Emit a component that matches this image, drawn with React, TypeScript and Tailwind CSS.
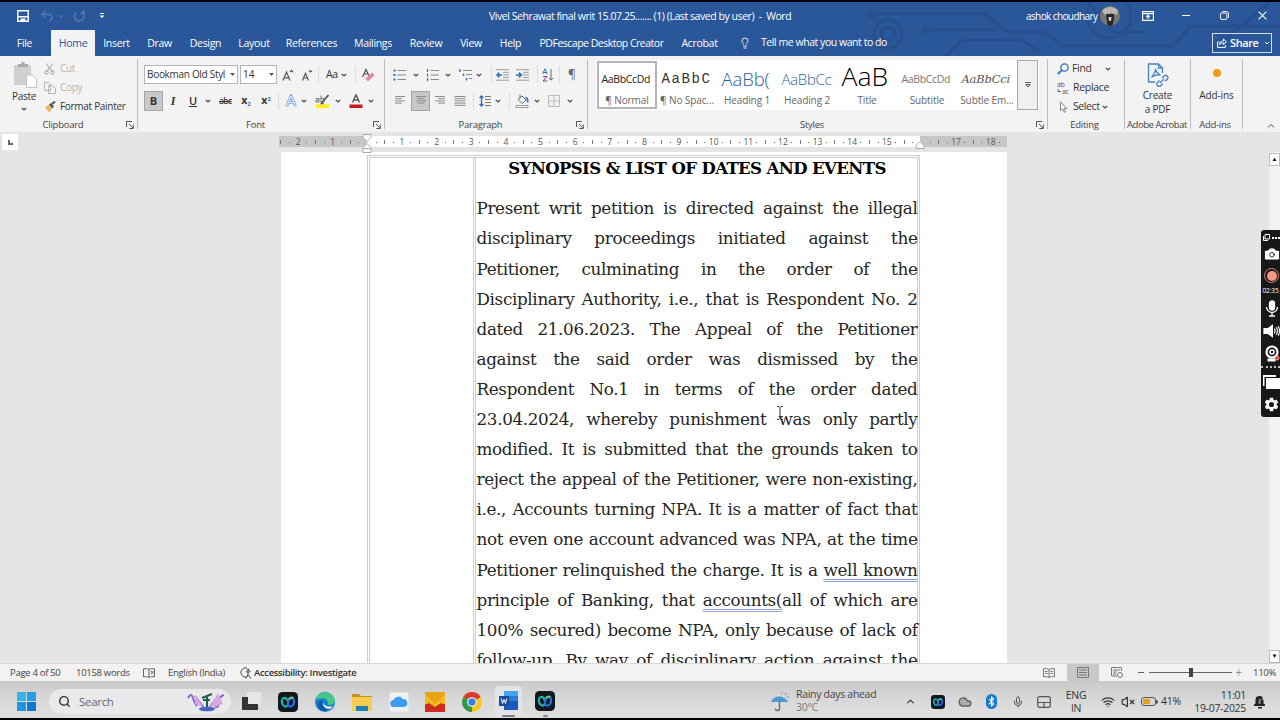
import type { ReactNode } from "react";
import { Search, Wifi, Mic, VolumeX, ChevronUp, Cloud, Lightbulb, Camera, Bluetooth } from "lucide-react";

const TABS = ["Insert", "Draw", "Design", "Layout", "References", "Mailings", "Review", "View", "Help", "PDFescape Desktop Creator", "Acrobat"];

const LINES: ReactNode[] = [
  "Present writ petition is directed against the illegal",
  "disciplinary proceedings initiated against the",
  "Petitioner, culminating in the order of the",
  "Disciplinary Authority, i.e., that is Respondent No. 2",
  "dated 21.06.2023. The Appeal of the Petitioner",
  "against the said order was dismissed by the",
  "Respondent No.1 in terms of the order dated",
  "23.04.2024, whereby punishment was only partly",
  "modified. It is submitted that the grounds taken to",
  "reject the appeal of the Petitioner, were non-existing,",
  "i.e., Accounts turning NPA. It is a matter of fact that",
  "not even one account advanced was NPA, at the time",
  <>Petitioner relinquished the charge. It is a <Flagged>well known</Flagged></>,
  <>principle of Banking, that <Flagged>accounts(</Flagged>all of which are</>,
  "100% secured) become NPA, only because of lack of",
  "follow-up. By way of disciplinary action against the",
];

// quarter-centimetre marks, counted from the left indent
const MARKS = Array.from({ length: 84 }, (_, i) => i - 10);

function Flagged({ children }: { children: ReactNode }) {
  return <span className="underline decoration-[#8ea3dc] decoration-double decoration-1 underline-offset-[3px] [text-decoration-skip-ink:none]">{children}</span>;
}

function Chevron({ className = "" }: { className?: string }) {
  return (
    <svg viewBox="0 0 8 8" className={`h-2 w-2 shrink-0 ${className}`} fill="none" stroke="#444" strokeWidth="1.2">
      <path d="M1.8 2.8 4 5l2.2-2.2" />
    </svg>
  );
}

function Caret() {
  return (
    <svg viewBox="0 0 5 3" className="h-[3px] w-[5px] shrink-0 fill-[#555]">
      <path d="M0 0h5L2.500 3z" />
    </svg>
  );
}

function Divider({ className = "" }: { className?: string }) {
  return <span className={`h-[17px] w-px shrink-0 bg-[#dcdcdc] ${className}`} />;
}

function Launcher({ className = "" }: { className?: string }) {
  return (
    <svg viewBox="0 0 8 8" className={`h-2 w-2 shrink-0 ${className}`} fill="none" stroke="#555" strokeWidth="1">
      <path d="M.5 6V.5H6M3 3l4 4M7.3 3.5v4h-4" />
    </svg>
  );
}

function Lines({ rows, className = "" }: { rows: [number, number][]; className?: string }) {
  return (
    <svg viewBox="0 0 12 12" className={`h-3 w-3 shrink-0 ${className}`} stroke="#8a8a8a" strokeWidth="1">
      {rows.map(([a, b], i) => (
        <path key={i} d={`M${a} ${1.5 + i * 2.2}H${b}`} />
      ))}
    </svg>
  );
}

function ListIcon({ kind, className = "" }: { kind: "dot" | "num" | "multi"; className?: string }) {
  return (
    <svg viewBox="0 0 14 12" className={`h-3 w-3.5 shrink-0 ${className}`} stroke="#8a8a8a" strokeWidth="1">
      {kind === "multi" ? (
        <>
          <path d="M4 1.5h9M7 5.5h6M10 9.5h3" />
          <path d="M1 0v3M4.500 4.500v2.500M7.500 9v2.500" stroke="#2f6eb5" strokeWidth="1.3" />
        </>
      ) : (
        <>
          <path d="M4.500 1.500H13M4.500 6H13M4.500 10.500H13" />
          {kind === "dot" ? (
            <path d="M.5 1.500h2M.5 6h2M.5 10.500h2" stroke="#2f6eb5" strokeWidth="2" />
          ) : (
            <path d="M1.500 0v3M1.500 4.500v3M1.500 9v3" stroke="#2f6eb5" strokeWidth="1.2" />
          )}
        </>
      )}
    </svg>
  );
}

function IndentIcon({ flip, className = "" }: { flip?: boolean; className?: string }) {
  return (
    <svg viewBox="0 0 13 12" className={`h-3 w-[13px] shrink-0 ${className}`} fill="none">
      <path d="M0 .7h13M7 3.300h6M7 5.900h6M7 8.500h6M0 11.200h13" stroke="#9a9a9a" />
      <path d={flip ? "M0 6h5M3 3.6 5.4 6 3 8.4" : "M1 6h5M3.4 3.6 1 6l2.4 2.4"} stroke="#2f6eb5" strokeWidth="1.5" />
    </svg>
  );
}

function Webex({ className = "" }: { className?: string }) {
  return (
    <svg viewBox="0 0 20 20" className={`shrink-0 ${className}`} fill="none">
      <rect width="20" height="20" rx="4.5" fill="#111820" />
      <ellipse cx="7" cy="10.2" rx="3" ry="4.4" stroke="#18b9a8" strokeWidth="2.2" transform="rotate(-15 7 10.2)" />
      <ellipse cx="13" cy="10.2" rx="3" ry="4.4" stroke="#2b6cf0" strokeWidth="2.2" transform="rotate(15 13 10.2)" />
      <path d="M11 7.500c1-2 3-2.400 4.200-1.200" stroke="#55d66b" strokeWidth="2" />
    </svg>
  );
}

function TitleBar() {
  return (
    <header className="relative flex h-[54px] flex-col bg-[#2a579a] text-white">
      <svg viewBox="0 0 420 54" className="absolute right-0 top-0 h-[54px] w-[420px]" fill="none" stroke="#264f8e" strokeWidth="3">
        <circle cx="12" cy="12" r="3" />
        <path d="M15 12h110l22 18h38l18 14h110l18-20h89" />
        <circle cx="28" cy="32" r="14" />
        <circle cx="28" cy="32" r="7" />
        <circle cx="66" cy="28" r="3" />
        <path d="M69 28h68M86 54l16-16h60l20 13M228 0l24 30h34M350 50l60-50" strokeWidth="2.4" />
        <circle cx="249" cy="14" r="22" strokeWidth="2" />
      </svg>
      <div className="relative flex h-[27px] items-center">
        <svg viewBox="0 0 12 12" className="ml-[17px] h-3 w-3" fill="none" stroke="#fff" strokeWidth="1.4">
          <path d="M.8.8h10.400v10.400H.8zM1 6.800h10" />
          <path d="M3.500 8.500h5v3h-5z" fill="#fff" stroke="none" />
        </svg>
        <svg viewBox="0 0 13 12" className="ml-3 h-3 w-[13px]" fill="none" stroke="#4f78b4" strokeWidth="1.5">
          <path d="M4.500 1 1 4.200l3.500 3.300M1 4.200h7a3.200 3.200 0 0 1 3 3.800c-.3 1.700-1.700 2.600-3 3" />
        </svg>
        <svg viewBox="0 0 8 8" className="ml-[3px] h-2 w-2" fill="none" stroke="#4f78b4">
          <path d="m2 3 2 2 2-2" />
        </svg>
        <svg viewBox="0 0 12 12" className="ml-2 h-3 w-3" fill="none" stroke="#4f78b4" strokeWidth="1.5">
          <path d="M8.500 1.500A5 5 0 1 1 3 2.100M11 0v3.500H7.500" />
        </svg>
        <svg viewBox="0 0 6 6" className="ml-[14px] h-1.5 w-1.5 fill-white">
          <path d="M1 0h4v1H1zM.5 2.500h5L3 5z" />
        </svg>
        <p className="ml-[384px] mt-[3px] w-[304px] whitespace-nowrap text-[10.5px] tracking-[-0.44px]">
          Vivel Sehrawat final writ 15.07.25....... (1) (Last saved by user)&nbsp; -&nbsp; Word
        </p>
        <p className="ml-[233px] mt-[2px] w-[67px] whitespace-nowrap text-[10px] tracking-[-0.6px]">ashok choudhary</p>
        <svg viewBox="0 0 20 20" className="ml-[7px] h-5 w-5">
          <circle cx="10" cy="10" r="10" fill="#77756f" />
          <path d="M2 5a10 10 0 0 1 16 0l-1 4-6-2-5 3z" fill="#b8b6ae" />
          <path d="M6 8h8v4l-1.500 7.500a10 10 0 0 1-5-.1z" fill="#25262a" />
          <path d="M8.500 11h3l-.5 4H9z" fill="#d8d4cd" />
        </svg>
        <svg viewBox="0 0 12 10" className="ml-[22px] h-2.5 w-3" fill="none" stroke="#fff" strokeWidth="1.1">
          <path d="M.6.6h10.800v8.800H.6zM.6 2.600h10.800M6 8V4.400M4.300 6 6 4.300 7.700 6" />
        </svg>
        <span className="ml-[28px] h-px w-2 bg-white" />
        <svg viewBox="0 0 9 9" className="ml-[30px] h-[9px] w-[9px]" fill="none" stroke="#fff">
          <rect x=".5" y="2" width="6.400" height="6.400" rx="1.2" />
          <path d="M2.500.6h4a2 2 0 0 1 2 2v4" />
        </svg>
        <svg viewBox="0 0 9 9" className="ml-[29px] h-[9px] w-[9px]" stroke="#fff" strokeWidth="1.1">
          <path d="m.6.6 7.800 7.800M8.400.6.6 8.400" />
        </svg>
      </div>
      <nav className="relative flex h-[27px] items-end text-[10.5px] tracking-[-0.3px]">
        <div className="grid h-[26px] grid-cols-[51px_44px_43px_43px_49px_48px_67px_56px_50px_40px_39px_143px_53px] items-center whitespace-nowrap text-center">
          <span className="pr-0.5 pt-px">File</span>
          <span className="flex h-full items-center justify-center bg-[#f3f3f3] pt-px text-[#2a579a]">Home</span>
          {TABS.map((t) => (
            <span key={t} className={t.length > 12 ? "pt-px tracking-[-0.5px]" : "pt-px"}>
              {t}
            </span>
          ))}
        </div>
        <Lightbulb className="mb-[6px] ml-[13px] h-[14px] w-3" strokeWidth={1.8} />
        <span className="mb-[5px] ml-[10px] w-[440px] tracking-[-0.45px]">Tell me what you want to do</span>
        <div className="mb-[3px] ml-[11px] flex h-5 w-[60px] items-center border border-white/80 pl-1">
          <svg viewBox="0 0 10 10" className="h-2.5 w-2.5 shrink-0" fill="none" stroke="#fff">
            <path d="M2.500 4H.6v5.400h7.800V7M2.500 6.500C3 4 4.500 3 6.500 3V1L9.400 3.800 6.500 6.500V5C4.500 5 3.500 5.500 2.500 6.500" />
          </svg>
          <b className="ml-[3px] w-[29px] text-[11px] font-semibold tracking-[-0.4px]">Share</b>
          <svg viewBox="0 0 8 8" className="ml-1 h-2 w-2 shrink-0" fill="none" stroke="#fff">
            <path d="m2 3 2 2 2-2" />
          </svg>
        </div>
      </nav>
    </header>
  );
}

function Group({ label, launcher, className, children }: { label: string; launcher?: boolean; className: string; children: ReactNode }) {
  return (
    <section className={`flex h-[70px] shrink-0 flex-col border-r border-[#bdbdbd] ${className}`}>
      <div className="h-[60px]">{children}</div>
      <div className="flex h-[12px] shrink-0 items-center pr-[3px] pt-[4px] text-[9.5px] tracking-[-0.25px] text-[#444]">
        <span className={`flex-1 whitespace-nowrap text-center ${label.length > 10 ? "pl-[2px] tracking-[-0.45px]" : ""}`}>{label}</span>
        {launcher && <Launcher />}
      </div>
    </section>
  );
}

function StyleTile({ name, className, selected, sample }: { name: string; className: string; selected?: boolean; sample: string }) {
  return (
    <div className={`flex h-[48px] w-[60px] shrink-0 flex-col items-center border-2 ${selected ? "border-[#b5b5b5]" : "border-transparent"}`}>
      <div className={`flex h-[29px] w-[51px] items-center whitespace-nowrap pt-[3px] leading-[26px] ${className}`}>{sample}</div>
      <div className="whitespace-nowrap text-[10px] leading-[16px] tracking-[-0.1px] text-[#666]">{name}</div>
    </div>
  );
}

function Ribbon() {
  return (
    <div className="flex h-[76px] bg-[#f3f3f3] pt-[3px] text-[11px] text-[#333]">
      <Group label="Clipboard" launcher className="w-[138px]">
        <div className="flex">
          <div className="ml-[11px] flex w-[26px] flex-col items-center pt-[3px]">
            <svg viewBox="0 0 24 26" className="ml-0.5 h-[26px] w-6">
              <path d="M1 3h17v20H1z" fill="#d0cfd1" />
              <path d="M5 2h3a2 2 0 0 1 4 0h3v3H5z" fill="#aaa" />
              <path d="M13.500 13h6l4 4v8.500h-10z" fill="#fff" stroke="#c4c4c4" />
            </svg>
            <span className="mt-0.5 text-[10px] leading-[13px] tracking-[-0.3px]">Paste</span>
            <Chevron className="mt-0.5" />
          </div>
          <div className="ml-[7px] flex flex-col text-[10px] tracking-[-0.3px]">
            <div className="flex h-[19px] items-center gap-[5px] text-[#b3b3b3]">
              <svg viewBox="0 0 11 12" className="h-3 w-[11px]" fill="none" stroke="#999">
                <path d="M2 .5 7.800 8M9 .5 3.200 8" />
                <circle cx="2.500" cy="9.500" r="1.700" />
                <circle cx="8.500" cy="9.500" r="1.700" />
              </svg>
              Cut
            </div>
            <div className="flex h-[19px] items-center gap-[4px] text-[#b3b3b3]">
              <svg viewBox="0 0 12 12" className="h-3 w-3" fill="#f3f3f3" stroke="#b3b3b3">
                <path d="M.5.500h4l2 2v6h-6zM4.500 3.500h4l3 3v5h-7z" />
              </svg>
              Copy
            </div>
            <div className="flex h-[19px] items-center gap-[4px] whitespace-nowrap">
              <svg viewBox="0 0 12 12" className="h-3 w-3">
                <path d="m1 6 4-2 3 4-3 3.500z" fill="#eab765" />
                <path d="m5 3.500 2-1.500 3 3.500-2 2z" fill="#555" />
                <path d="m8 3 3-2.500" stroke="#555" strokeWidth="2" />
              </svg>
              Format Painter
            </div>
          </div>
        </div>
      </Group>

      <Group label="Font" launcher className="w-[247px]">
        <div className="ml-[6px] flex h-[31px] items-center">
          <div className="flex h-[19px] w-[94px] shrink-0 items-center justify-between border border-[#b5b5b5] bg-white px-[2px] text-[10px] tracking-[-0.3px]">
            <span className="whitespace-nowrap">Bookman Old Styl</span>
            <Caret />
          </div>
          <div className="ml-[2px] flex h-[19px] w-[37px] shrink-0 items-center justify-between border border-[#b5b5b5] bg-white px-[2px] text-[10px]">
            14 <Caret />
          </div>
          <svg viewBox="0 0 12 12" className="ml-[5px] h-3 w-3 shrink-0" fill="none" stroke="#555" strokeWidth="1.200">
            <path d="M1 11.500 4.500 3 8 11.500M2.200 8.800h4.600M8 3l1.500-1.600L11 3" />
          </svg>
          <svg viewBox="0 0 12 12" className="ml-[7px] h-3 w-3 shrink-0" fill="none" stroke="#555" strokeWidth="1.200">
            <path d="M1.500 11.500 4.500 4.300l3 7.200M2.500 9h4M8 1.500 9.500 3 11 1.500" />
          </svg>
          <Divider className="ml-[5px]" />
          <span className="ml-[7px] w-[13px] text-[10.5px] tracking-[-0.4px]">Aa</span>
          <Chevron className="ml-[1px]" />
          <Divider className="ml-[7px]" />
          <svg viewBox="0 0 14 14" className="ml-[5px] h-3.5 w-3.5 shrink-0" fill="none">
            <path d="M1.500 9 5 1.500 8.500 9M3 6h4" stroke="#555" strokeWidth="1.200" />
            <path d="m4.500 10.500 6.500-6 2.500 2.500-6.500 6.500z" fill="#e5879a" />
          </svg>
        </div>
        <div className="ml-[6px] flex h-[22px] items-center">
          <span className="flex h-5 w-[19px] shrink-0 items-center justify-center border border-[#a5a5a5] bg-[#c8c8c8] font-bold">B</span>
          <span className="ml-[4px] w-3 text-center font-['Liberation_Serif'] text-[12px] font-bold italic">I</span>
          <span className="ml-[8px] w-3 text-center text-[11px] font-semibold underline">U</span>
          <Chevron className="ml-[5px]" />
          <span className="ml-[7px] w-[15px] text-[8.5px] font-semibold tracking-[-0.6px] line-through">abc</span>
          <span className="ml-[5px] w-3.5 whitespace-nowrap text-center text-[10.5px] font-bold">x<sub className="text-[6px] text-[#2f6eb5]">2</sub></span>
          <span className="ml-[6px] w-3.5 whitespace-nowrap text-center text-[10.5px] font-bold">x<sup className="text-[6px] text-[#2f6eb5]">2</sup></span>
          <Divider className="ml-[5px]" />
          <svg viewBox="0 0 14 14" className="ml-[5px] h-3.5 w-3.5 shrink-0" fill="none">
            <path d="M2.500 12.500 7 2l4.500 10.500M4.500 8.700h5" stroke="#78a9de" strokeWidth="2.800" />
            <path d="M2.500 12.500 7 2l4.500 10.500M4.500 8.700h5" stroke="#fff" strokeWidth=".9" />
          </svg>
          <Chevron className="ml-[2px]" />
          <svg viewBox="0 0 18 14" className="ml-[6px] h-3.5 w-[18px] shrink-0" fill="none">
            <path d="M2 10.300h13V14H2z" fill="#ffee1c" />
            <path d="m8 8.500 6.500-7.500M6.500 9.500l3-.5" stroke="#555" strokeWidth="1.800" />
            <path d="M2 4.500h3V8H2V6h3M7 1.500V8M7 4.500h3V8H7" stroke="#666" strokeWidth=".9" />
          </svg>
          <Chevron className="ml-[2px]" />
          <svg viewBox="0 0 14 14" className="ml-[7px] h-3.5 w-3.5 shrink-0" fill="none">
            <path d="M3.500 8.500 7 .8l3.500 7.700M4.800 6h4.400" stroke="#555" strokeWidth="1.400" />
            <path d="M.5 10.500h13V14H.5z" fill="#c8161d" />
          </svg>
          <Chevron className="ml-[4px]" />
        </div>
      </Group>

      <Group label="Paragraph" launcher className="w-[203px]">
        <div className="ml-[8px] flex h-[31px] items-center">
          <ListIcon kind="dot" />
          <Chevron className="ml-[5px]" />
          <ListIcon kind="num" className="ml-[6px]" />
          <Chevron className="ml-[4px]" />
          <ListIcon kind="multi" className="ml-[7px]" />
          <Chevron className="ml-[2px]" />
          <Divider className="ml-[8px]" />
          <IndentIcon className="ml-[4px]" />
          <IndentIcon flip className="ml-[7px]" />
          <Divider className="ml-[8px]" />
          <svg viewBox="0 0 12 14" className="ml-[4px] h-3.5 w-3 shrink-0" fill="none">
            <path d="M.7 6 3 .8 5.300 6M1.500 4.500h3" stroke="#2f6eb5" />
            <path d="M1 8.500h4l-4 4.500h4.300" stroke="#7b3f99" />
            <path d="M9 1v11M6.800 9.800 9 12.200l2.200-2.400" stroke="#666" />
          </svg>
          <Divider className="ml-[5px]" />
          <span className="ml-[6px] w-3 text-center text-[12px] text-[#666]">¶</span>
        </div>
        <div className="ml-[9px] flex h-[22px] items-center">
          <Lines rows={[[1, 11], [1, 8], [1, 11], [1, 8]]} />
          <span className="ml-[5px] flex h-5 w-[19px] items-center justify-center border border-[#a5a5a5] bg-[#c8c8c8]">
            <Lines rows={[[1, 11], [2.5, 9.5], [1, 11], [2.5, 9.5]]} />
          </span>
          <Lines className="ml-[4px]" rows={[[1, 11], [4, 11], [1, 11], [4, 11]]} />
          <Lines className="ml-[8px]" rows={[[0.5, 11.5], [0.5, 11.5], [0.5, 11.5], [0.5, 11.5], [0.5, 11.5]]} />
          <Divider className="ml-[7px]" />
          <svg viewBox="0 0 13 12" className="ml-[5px] h-3 w-[13px] shrink-0" fill="none">
            <path d="M6 1.500h6M6 4.500h6M6 7.500h6M6 10.500h6" stroke="#777" />
            <path d="M2.500 1v10M.6 3 2.500 1l1.900 2M.6 9l1.900 2 1.900-2" stroke="#2f6eb5" strokeWidth="1.300" />
          </svg>
          <Chevron className="ml-[2px]" />
          <Divider className="ml-[7px]" />
          <svg viewBox="0 0 14 14" className="ml-[5px] h-3.5 w-3.5 shrink-0" fill="none">
            <path d="M3 5.500 7 2l4 4-4 3.500zM5 .5v4" stroke="#666" />
            <path d="M10.500 3.500c2 .5 2.500 2.500 2 5" stroke="#2f6eb5" strokeWidth="1.600" />
            <path d="M1 11.500h12v2H1z" stroke="#999" fill="#fff" />
          </svg>
          <Chevron className="ml-[4px]" />
          <svg viewBox="0 0 12 12" className="ml-[7px] h-3 w-3 shrink-0" fill="none" stroke="#bbb">
            <path d="M.5.500h11v11H.5zM6 .5v11M.5 6h11" />
          </svg>
          <Chevron className="ml-[6px]" />
        </div>
      </Group>

      <Group label="Styles" launcher className="w-[460px]">
        <div className="ml-[8px] mt-[1px] flex h-[50px] w-[443px] bg-white pl-px pt-[1px]">
          <StyleTile selected name="¶ Normal" sample="AaBbCcDd" className="text-[10.5px] tracking-[-0.35px] text-[#222]" />
          <StyleTile name="¶ No Spac..." sample="AaBbC" className="font-['Liberation_Mono'] text-[14px] tracking-[1.600px] text-[#333]" />
          <StyleTile name="Heading 1" sample="AaBb(" className="text-[18.5px] font-light tracking-[-0.1px] text-[#2e5d96]" />
          <StyleTile name="Heading 2" sample="AaBbCc" className="text-[15px] font-light tracking-[-0.3px] text-[#2e5d96]" />
          <StyleTile name="Title" sample="AaB" className="pb-[6px] text-[26.5px] font-light text-black" />
          <StyleTile name="Subtitle" sample="AaBbCcDd" className="text-[10.5px] tracking-[-0.35px] text-[#777]" />
          <StyleTile name="Subtle Em..." sample="AaBbCci" className="font-['DejaVu_Serif'] text-[11.5px] italic tracking-[-0.2px] text-[#555]" />
          <div className="mt-[-1px] flex h-[50px] w-[21px] items-center justify-center border border-[#a9a9a9] bg-[#f0f0f0]">
            <svg viewBox="0 0 6 6" className="h-1.5 w-1.5" fill="none" stroke="#555">
              <path d="M0 .5h6M.8 2.500 3 5l2.200-2.500z" />
            </svg>
          </div>
        </div>
      </Group>

      <Group label="Editing" className="w-[77px]">
        <div className="flex flex-col pl-[9px] text-[10.5px] tracking-[-0.3px]">
          <div className="flex h-[19px] items-center">
            <svg viewBox="0 0 12 12" className="h-3 w-3" fill="none" stroke="#2f6eb5" strokeWidth="1.300">
              <circle cx="7.500" cy="4.500" r="3.700" />
              <path d="M4.800 7.200.8 11.200" strokeWidth="1.800" />
            </svg>
            <span className="ml-[3px] w-[32px]">Find</span>
            <Chevron />
          </div>
          <div className="flex h-[19px] items-center">
            <svg viewBox="0 0 12 12" className="h-3 w-3 overflow-visible font-['Open_Sans'] text-[7px]">
              <text x="0" y="5" fill="#7b3f99">ab</text>
              <text x="5" y="11.500" fill="#555">ac</text>
              <path d="M1 7v2.500h3" stroke="#2f6eb5" fill="none" />
            </svg>
            <span className="ml-[4px]">Replace</span>
          </div>
          <div className="flex h-[19px] items-center">
            <svg viewBox="0 0 12 12" className="h-3 w-3" fill="#fff" stroke="#888">
              <path d="M3.500.8v9l2.200-2 1.500 3.500 1.300-.6-1.500-3.200h3z" />
            </svg>
            <span className="ml-[4px] tracking-[-0.4px]">Select</span>
            <Chevron className="ml-[1px]" />
          </div>
        </div>
      </Group>

      <Group label="Adobe Acrobat" className="w-[66px]">
        <div className="flex flex-col items-center pt-[4px] text-center text-[10px] leading-[13.5px] tracking-[-0.2px]">
          <svg viewBox="0 0 22 25" className="h-[25px] w-[22px]" fill="none" stroke="#4a80c4" strokeWidth="1.300">
            <path d="M8 19H1.500V1h10l4 4v5M11.500 1v4h4" />
            <path d="M4.500 14c2-2 4-5 4-8 1 4 3 5.500 5 6-3-.5-6 .5-9 2z" />
            <path d="m13 20 4-4M12.500 17.500l-2 2a2.200 2.200 0 0 0 3.200 3.200l2-2M15 15l2-2a2.200 2.200 0 0 1 3.200 3.200l-2 2" />
          </svg>
          <span className="mt-px">Create</span>
          a PDF
        </div>
      </Group>

      <Group label="Add-ins" className="w-[52px]">
        <div className="flex flex-col items-center pt-[10px] text-[10px] tracking-[-0.1px]">
          <span className="h-2 w-2 rounded-full bg-[#f39a14]" />
          <span className="mt-[11px]">Add-ins</span>
        </div>
      </Group>
      <div className="flex h-[70px] flex-1 items-end justify-end pr-[5px]">
        <svg viewBox="0 0 8 6" className="h-1.5 w-2" fill="none" stroke="#555">
          <path d="m.8 4.500 3.200-3 3.200 3" />
        </svg>
      </div>
    </div>
  );
}

function Ruler() {
  return (
    <div className="flex h-5 items-start bg-[#e5e5e5]">
      <div className="ml-[2px] mt-[2px] flex h-4 w-4 items-center justify-center bg-white">
        <span className="h-[5px] w-[5px] border-b-2 border-l-2 border-[#666]" />
      </div>
      <div className="relative ml-[261px] mt-1 h-[11px] w-[728px] bg-[linear-gradient(90deg,#c6c6c6_88px,#fff_88px,#fff_641px,#c6c6c6_641px)]">
        <div className="-ml-[2.5px] flex h-full items-center pt-px text-[8.5px] leading-none text-[#555]">
          {MARKS.map((m) => (
            <span key={m} className="flex w-[8.67px] shrink-0 items-center justify-center">
              {m === 0 || m === 64 ? "" : m % 4 === 0 ? Math.abs(m / 4) : m % 2 === 0 ? <i className="h-1 w-px bg-[#777]" /> : <i className="h-px w-px bg-[#666]" />}
            </span>
          ))}
        </div>
        <svg viewBox="0 0 10 20" className="absolute left-[83px] top-[-2px] h-5 w-2.5" fill="#fff" stroke="#aaa">
          <path d="M1 .5h8v3L5 7.500l-4-4zM5 9.500l4 4v5H1v-5zM1 14.500h8" />
        </svg>
        <svg viewBox="0 0 10 8" className="absolute left-[636px] top-[5px] h-2 w-2.5" fill="#fff" stroke="#aaa">
          <path d="m5 .5 4 4v3H1v-3z" />
        </svg>
      </div>
    </div>
  );
}

function Document() {
  return (
    <main className="flex h-[511px] justify-between overflow-hidden bg-[#e5e5e5]">
      <div className="ml-[281px] flex w-[726px] bg-white">
        <div className="ml-[86px] mt-[3px] flex w-[553px] shrink-0 border-x-[3px] border-t-[3px] border-double border-[#cdcdcd]">
          <div className="w-[106px] shrink-0 border-r-[3px] border-double border-[#cdcdcd]" />
          <article className="ml-[0.5px] w-[441px] shrink-0 whitespace-nowrap font-['DejaVu_Serif'] text-[16.8px] text-[#262626]">
            <h1 className="flex h-[23px] items-center justify-center text-[16.5px] font-bold tracking-[-0.6px] text-black">
              SYNOPSIS &amp; LIST OF DATES AND EVENTS
            </h1>
            <div className="mt-[12.4px]">
              {LINES.map((line, i) => (
                <p key={i} className="h-[30.1px] whitespace-normal leading-[30px] tracking-[-0.35px] [text-align-last:justify] [word-spacing:-2px]">
                  {line}
                </p>
              ))}
            </div>
          </article>
        </div>
      </div>
      <aside className="flex w-[11px] flex-col justify-between bg-[#f2f2f2]">
        <span className="mt-px flex h-[13px] items-center justify-center border border-[#bbb] bg-white text-[6px]">▲</span>
        <span className="flex h-[13px] items-center justify-center border border-[#bbb] bg-white text-[6px]">▼</span>
      </aside>
    </main>
  );
}

function Recorder() {
  return (
    <div className="absolute left-[1261px] top-[230px] flex h-[187px] w-[19px] flex-col items-center rounded-l-[3px] bg-[#1a1718] text-white">
      <div className="mt-[3px] flex h-[9px] items-center gap-[2px] pl-[2px]">
        <svg viewBox="0 0 7 7" className="h-[7px] w-[7px]" fill="none" stroke="#fff">
          <path d="M2 .5h4.500V5H2zM.5 2v4.500H5" />
        </svg>
        <span className="w-2 border-t-2 border-dotted border-white" />
      </div>
      <Camera className="ml-[2px] mt-[3px] h-[18px] w-[18px] shrink-0 fill-white text-[#1a1718]" strokeWidth={1.2} />
      <span className="ml-[2px] mt-[5px] flex h-[15px] w-[15px] shrink-0 items-center justify-center rounded-full border border-[#d98880]">
        <span className="h-[10px] w-[10px] rounded-full bg-[#f3998a]" />
      </span>
      <span className="mt-[3px] text-[6.5px] leading-[9px] tracking-[-0.1px]">02:35</span>
      <svg viewBox="0 0 14 17" className="ml-[2px] mt-[5px] h-[17px] w-3.5 shrink-0" fill="none" stroke="#fff" strokeWidth="1.300">
        <rect x="4.500" y="1" width="5" height="9" rx="2.500" fill="#fff" />
        <path d="M1.500 7a5.500 5.500 0 0 0 11 0M7 12.500V16M4 16h6" />
      </svg>
      <svg viewBox="0 0 18 14" className="ml-px mt-[7px] h-3.5 w-[17px] shrink-0" fill="none" stroke="#fff" strokeWidth="1.200">
        <path d="M1 4.500h3v5H1zM5 4.500 10 1v12L5 9.500z" fill="#fff" />
        <path d="M12 4.500q1.500 2.500 0 5M14 3q2.500 4 0 8M16 2q3 5 0 10" />
      </svg>
      <svg viewBox="0 0 16 17" className="ml-[2px] mt-[7px] h-[17px] w-4 shrink-0" fill="none" stroke="#fff">
        <circle cx="8" cy="7" r="5.500" strokeWidth="2.200" />
        <circle cx="8" cy="7" r="2" strokeWidth="1.500" />
        <path d="M3.500 15h8" strokeWidth="3" />
        <circle cx="13" cy="13" r="2" fill="#e53935" stroke="#f5a7a0" />
      </svg>
      <span className="mt-[4px] w-full shrink-0 border-t-2 border-dotted border-[#bbb]" />
      <svg viewBox="0 0 17 14" className="ml-[2px] mt-[7px] h-3.5 w-[17px] shrink-0" fill="#fff">
        <path d="M0 0h13v2H1.500v9H0zM3 3h14v11H3z" />
      </svg>
      <svg viewBox="0 0 24 24" className="ml-[2px] mt-[6px] h-[19px] w-[17px] shrink-0 fill-white">
        <path d="M19.140 12.940a7 7 0 0 0 0-1.880l2.030-1.580a.5.5 0 0 0 .12-.61l-1.920-3.320a.5.5 0 0 0-.59-.22l-2.390.96a7 7 0 0 0-1.620-.94l-.36-2.540a.5.500 0 0 0-.48-.41h-3.840a.5.500 0 0 0-.47.410l-.36 2.540a7 7 0 0 0-1.620.94l-2.390-.96a.5.500 0 0 0-.59.220L2.740 8.870a.5.500 0 0 0 .12.610l2.030 1.580a7 7 0 0 0 0 1.880l-2.030 1.580a.5.500 0 0 0-.12.610l1.920 3.320c.12.220.37.290.59.220l2.390-.96c.5.380 1.030.7 1.620.94l.36 2.540c.5.240.24.410.48.410h3.840c.24 0 .44-.17.470-.41l.36-2.540a7 7 0 0 0 1.620-.94l2.390.96c.22.080.47 0 .59-.22l1.920-3.320a.5.500 0 0 0-.12-.61zM12 15.600a3.600 3.600 0 1 1 0-7.200 3.600 3.600 0 0 1 0 7.200z" />
      </svg>
    </div>
  );
}

function StatusBar() {
  return (
    <footer className="flex h-[18px] items-center whitespace-nowrap border-t border-[#d8d8d8] bg-[#f2f2f2] text-[9.5px] tracking-[-0.3px] text-[#444]">
      <span className="ml-[10px] w-[66px] pt-0.5">Page 4 of 50</span>
      <span className="w-[67px] pt-0.5">10158 words</span>
      <svg viewBox="0 0 12 10" className="h-2.5 w-3 shrink-0" fill="none" stroke="#666">
        <path d="M6 1.500C4.500.500 2.500.500.500.800v8c2-.3 4-.3 5.500.7V1.500C7.500.500 9.500.500 11.500.800v8c-2-.3-4-.3-5.500.7M8 3l2.500 3M10.500 3 8 6" />
      </svg>
      <span className="ml-[13px] w-[72px] pt-0.5">English (India)</span>
      <svg viewBox="0 0 12 12" className="h-3 w-3 shrink-0" fill="none" stroke="#444">
        <path d="M7 1a4.700 4.700 0 1 0 0 9M6 4.500l2 .7 2.500-.7M8 5v2.500l-2 4M8 7.500l3 4" />
        <circle cx="8.200" cy="3" r=".8" fill="#444" />
      </svg>
      <b className="ml-[2px] w-[104px] pt-0.5 font-semibold tracking-[-0.35px] text-[#333]">Accessibility: Investigate</b>
      <svg viewBox="0 0 12 10" className="ml-[685px] h-2.5 w-3 shrink-0" fill="none" stroke="#777">
        <path d="M6 1.500C4.500.500 2.500.500.500.800v8c2-.3 4-.3 5.500.7zM6 1.500C7.500.500 9.500.500 11.500.800v8c-2-.3-4-.3-5.500.7M2 3.500h2.500M2 5.500h2.500M7.500 3.500H10M7.500 5.500H10" />
      </svg>
      <span className="ml-[12px] flex h-full w-[32px] items-center justify-center bg-[#c8c8c8]">
        <svg viewBox="0 0 12 11" className="h-[11px] w-3" fill="none" stroke="#777">
          <path d="M.5.500h11v10H.5zM2 3h8M2 5.500h8M2 8h8" />
        </svg>
      </span>
      <svg viewBox="0 0 12 11" className="ml-[12px] h-[11px] w-3 shrink-0" fill="none" stroke="#777">
        <path d="M6 9H.5V.500h10V4M2 3h7M2 5h4M2 7h3" />
        <circle cx="9" cy="8" r="2.500" />
      </svg>
      <span className="ml-[15px] h-px w-[6px] bg-[#666]" />
      <span className="ml-[5px] h-px w-[40px] bg-[#666]" />
      <span className="h-[9px] w-1 bg-[#444]" />
      <span className="h-px w-[39px] bg-[#666]" />
      <span className="ml-[3px] w-2 text-[13px] font-light leading-none text-[#555]">+</span>
      <span className="ml-[10px] pt-0.5">110%</span>
    </footer>
  );
}

function Taskbar() {
  return (
    <footer className="flex h-[37px] items-center whitespace-nowrap bg-gradient-to-b from-[#c9c9c9] via-[#d8d8d8] to-[#dfdfdf] pt-1 text-[10.5px] tracking-[-0.3px] text-[#333]">
      <div className="ml-[17px] grid h-[19px] w-[19px] grid-cols-2 gap-px">
        <i className="bg-[#36b4ea]" />
        <i className="bg-[#229fe2]" />
        <i className="bg-[#1c95dc]" />
        <i className="bg-[#0b79cf]" />
      </div>
      <div className="ml-[13px] flex h-[25px] w-[182px] items-center rounded-full bg-[#e9e9e9] pl-[9px]">
        <Search className="h-[13px] w-[13px]" strokeWidth={2.6} />
        <span className="ml-[8px] w-[108px] text-[11.5px] text-[#666]">Search</span>
        <svg viewBox="0 0 38 20" className="h-5 w-[38px]" fill="none">
          <path d="M1 6q3-6 5 0t4 8M8 4l9 12M31 4l-9 12M37 3q-5 1-5 7t-4 5" stroke="#8a63c7" strokeWidth="2" />
          <path d="m8 2 8 13-8-3zM31 1 22 16l14-4z" fill="#d7a6e6" />
          <path d="M15 6l10-4M20 5v10M16 8h7" stroke="#245c50" strokeWidth="2" />
          <ellipse cx="20" cy="17" rx="8" ry="2.300" fill="#4a63c8" />
        </svg>
      </div>
      <svg viewBox="0 0 19 19" className="ml-[11px] h-[19px] w-[19px]">
        <path d="M5 0h14v13H5z" fill="#e6e6e6" />
        <path d="M0 5h6v7h10v6H0z" fill="#333" />
      </svg>
      <Webex className="ml-[17px] h-5 w-5" />
      <svg viewBox="0 0 20 20" className="ml-[17px] h-5 w-5">
        <circle cx="10" cy="10" r="10" fill="#1681cf" />
        <path d="M1 7C4-1 16-2 19.500 7c1.500 5-4 7-7 5.500C14 10 12 6.500 8 6.500c-3 0-5.500 1-7 .5z" fill="#45c787" />
        <path d="M8 9c-2 3 0 8 6 8-5 4-11 1-11-4 0-3 2-5 5-4z" fill="#125aa8" />
        <path d="M8.500 10.500c0 3 4 5 9 3.500l-1.500 2.500C11 18 7 14 8.500 10.500z" fill="#e4f3fb" />
      </svg>
      <svg viewBox="0 0 20 18" className="ml-[17px] h-[18px] w-5">
        <path d="M0 1h7l2 2h11v6H0z" fill="#c78f20" />
        <path d="M0 4h20v14H0z" fill="#f7cd50" />
        <path d="M4 13h12v5H4z" fill="#1c81b5" />
      </svg>
      <svg viewBox="0 0 20 20" className="ml-[17px] h-5 w-5">
        <rect x=".5" y=".5" width="19" height="19" rx="2" fill="#eef2f6" />
        <path d="M5 15a3.500 3.500 0 0 1-.5-7A5 5 0 0 1 13.500 7a4 4 0 0 1 1.500 8z" fill="#3a9df0" />
      </svg>
      <svg viewBox="0 0 20 20" className="ml-[16px] h-5 w-5">
        <path d="M0 0h20v20H0z" fill="#c5271f" />
        <path d="M0 0h20v12H0z" fill="#e8a313" />
        <path d="m0 2 10 10L20 2v10l-10 4-10-4z" fill="#f3bb22" />
        <path d="M0 20v-7l4-2 6 4 6-4 4 2v7z" fill="#cc2b22" />
      </svg>
      <svg viewBox="0 0 20 20" className="ml-[17px] h-5 w-5">
        <circle cx="10" cy="10" r="10" fill="#f8c81c" />
        <path d="M10 10 1.340 5A10 10 0 0 1 18.660 5z" fill="#d93a30" />
        <path d="M10 10v10A10 10 0 0 1 1.340 5z" fill="#2b9a4b" />
        <circle cx="10" cy="10" r="4.800" fill="#fff" />
        <circle cx="10" cy="10" r="3.700" fill="#3b7de2" />
      </svg>
      <div className="ml-[13px] flex h-[31px] w-[27px] flex-col items-center justify-between rounded bg-[#e2e3e4] pt-[5px]">
        <svg viewBox="0 0 20 19" className="h-[19px] w-5">
          <path d="M5 0h14v5H5z" fill="#41a5ee" />
          <path d="M5 5h14v5H5z" fill="#2b7cd3" />
          <path d="M5 10h14v9H5z" fill="#185abd" />
          <path d="M0 5h10v10H0z" fill="#1c4c9c" />
          <path d="m2.200 7.500 1.300 5L5 8.500l1.500 4 1.300-5" fill="none" stroke="#fff" />
        </svg>
        <i className="h-[2px] w-[13px] rounded bg-[#777d88]" />
      </div>
      <div className="ml-[13px] flex h-[31px] flex-col items-center justify-between pt-[5px]">
        <Webex className="h-5 w-5" />
        <i className="h-[2px] w-[5px] rounded bg-[#888]" />
      </div>
      <svg viewBox="0 0 20 20" className="ml-[215px] h-5 w-5" fill="none">
        <path d="M1 10Q3 4.500 9 4.500T18 10z" fill="#4a9ad6" />
        <path d="M9.500 9v7.500a2 2 0 0 1-4 0" stroke="#666" strokeWidth="1.300" />
        <path d="m11 2 1-1.500M15 3l1.500-2M17 6l2-1.500M14 0l.5-1" stroke="#6bb0e0" strokeWidth="1.300" />
      </svg>
      <div className="mb-0.5 ml-[6px] w-[109px] leading-[13px] text-[#444]">
        <p>Rainy days ahead</p>
        <p className="text-[#777]">30°C</p>
      </div>
      <ChevronUp className="h-[13px] w-[11px]" strokeWidth={2.4} />
      <Webex className="ml-[15px] h-[14px] w-[14px]" />
      <Cloud className="ml-[13px] h-[14px] w-[14px] fill-[#aaa] text-[#555]" />
      <span className="ml-[14px] flex h-[15px] w-[11px] items-center justify-center rounded-full bg-[#1478d4]">
        <Bluetooth className="h-[11px] w-[11px] text-white" strokeWidth={2.4} />
      </span>
      <Mic className="ml-[15px] h-[14px] w-[12px] text-[#555]" />
      <svg viewBox="0 0 14 12" className="ml-[13px] h-3 w-3.5" fill="none" stroke="#555" strokeWidth="1.200">
        <rect x=".7" y=".7" width="12.600" height="10.600" rx="2" />
        <path d="M.7 6.500h12.600M7 6.500v5" />
      </svg>
      <div className="ml-[12px] w-[26px] text-center leading-[13px]">
        <p>ENG</p>
        <p>IN</p>
      </div>
      <Wifi className="ml-[12px] h-[14px] w-[14px]" />
      <VolumeX className="ml-[6px] h-[14px] w-[14px]" />
      <span className="ml-[6px] flex h-[9px] w-[15px] items-center rounded-[3px] border border-[#555] p-px">
        <i className="h-full w-[7px] rounded-[1px] bg-[#e0a020]" />
      </span>
      <i className="h-1 w-[2px] rounded-r bg-[#555]" />
      <span className="ml-[3px] w-[20px]">41%</span>
      <div className="ml-[7px] w-[58px] text-right leading-[13px]">
        <p>11:01</p>
        <p>19-07-2025</p>
      </div>
      <svg viewBox="0 0 13 14" className="ml-[7px] h-3.5 w-[13px]">
        <path d="M1 11V9.500l1.500-1V5a4 4 0 0 1 8 0v3.500l1.500 1V11zM5 12h4v1.500H5z" fill="#222" />
        <path d="M5.500 5H8L5.500 8H8M9 1h2.500L9 4h2.500" fill="none" stroke="#ddd" strokeWidth=".8" />
      </svg>
    </footer>
  );
}

export default function App() {
  return (
    <div className="relative h-[720px] w-[1280px] overflow-hidden bg-black pt-[2px] font-['Open_Sans','Noto_Sans',sans-serif]">
      <TitleBar />
      <Ribbon />
      <Ruler />
      <Document />
      <StatusBar />
      <Taskbar />
      <Recorder />
      <svg viewBox="0 0 8 14" className="absolute left-[776px] top-[406px] h-3.5 w-2" fill="none" stroke="#333">
        <path d="M1 .5h2l1 1 1-1h2M4 1.500v11M1 13.500h2l1-1 1 1h2" />
      </svg>
    </div>
  );
}
